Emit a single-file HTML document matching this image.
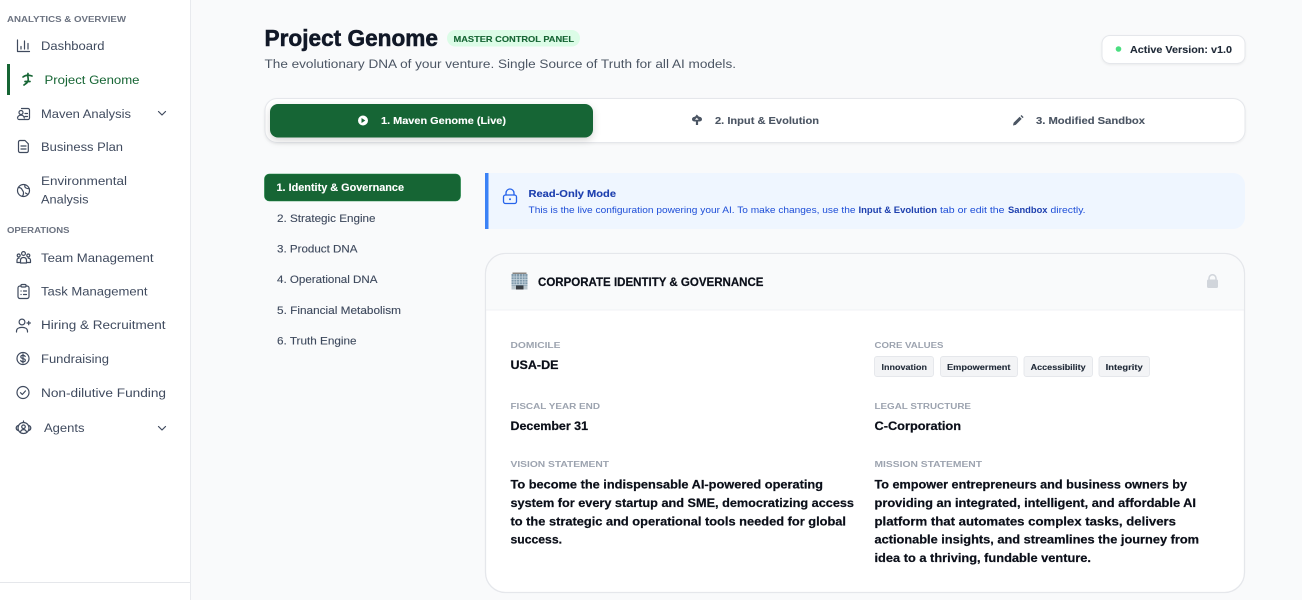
<!DOCTYPE html>
<html lang="en"><head><meta charset="utf-8"><title>Project Genome</title>
<style>
html,body{margin:0;padding:0;width:1302px;height:600px;overflow:hidden;background:#f9fafb}
svg{display:block}
text{font-family:"Liberation Sans",Arial,sans-serif;white-space:pre}
.nav{font-size:12.2px;fill:#3f4a5e}
.sec{font-size:8.6px;font-weight:700;fill:#6b7280}
.sub{font-size:10.8px;fill:#3f4a5e;stroke:#3f4a5e;stroke-width:.12}
.lab{font-size:8px;font-weight:700;fill:#9ca3af}
.val{font-size:12.2px;font-weight:700;fill:#0b0f19;stroke:#0b0f19;stroke-width:.22}
.tag{font-size:8.3px;font-weight:700;fill:#1f2937;stroke:#1f2937;stroke-width:.12}
.ic{fill:none;stroke:#3f4a5e;stroke-width:1.2;stroke-linecap:round;stroke-linejoin:round}
</style></head><body>
<svg xmlns="http://www.w3.org/2000/svg" width="1302" height="600" viewBox="0 0 1302 600">
<defs>
<filter id="s1" x="-10%" y="-40%" width="120%" height="190%"><feDropShadow dx="0" dy="3" stdDeviation="4" flood-color="#000" flood-opacity=".16"/></filter>
<filter id="s2" x="-5%" y="-10%" width="110%" height="125%"><feDropShadow dx="0" dy="1" stdDeviation="1" flood-color="#000" flood-opacity=".06"/></filter>
</defs>
<rect width="1302" height="600" fill="#f9fafb"/>

<!-- sidebar -->
<rect x="0" y="0" width="190" height="600" fill="#fff"/>
<rect x="190" y="0" width="1" height="600" fill="#e8eaee"/>
<rect x="0" y="582" width="190" height="1" fill="#e5e7eb"/>
<rect x="7" y="64" width="3" height="31" fill="#166534"/>

<text class="sec" x="7" y="22" textLength="119" lengthAdjust="spacingAndGlyphs">ANALYTICS &amp; OVERVIEW</text>
<text class="nav" x="41" y="50" textLength="63.500" lengthAdjust="spacingAndGlyphs">Dashboard</text>
<text class="nav" x="44.500" y="84" textLength="95" lengthAdjust="spacingAndGlyphs" style="fill:#166534">Project Genome</text>
<text class="nav" x="41" y="118" textLength="90" lengthAdjust="spacingAndGlyphs">Maven Analysis</text>
<text class="nav" x="41" y="151" textLength="82" lengthAdjust="spacingAndGlyphs">Business Plan</text>
<text class="nav" x="41" y="185" textLength="86" lengthAdjust="spacingAndGlyphs">Environmental</text>
<text class="nav" x="41" y="203.500" textLength="47.500" lengthAdjust="spacingAndGlyphs">Analysis</text>
<text class="sec" x="7" y="233" textLength="62.500" lengthAdjust="spacingAndGlyphs">OPERATIONS</text>
<text class="nav" x="41" y="262" textLength="112.500" lengthAdjust="spacingAndGlyphs">Team Management</text>
<text class="nav" x="41" y="295.500" textLength="106.500" lengthAdjust="spacingAndGlyphs">Task Management</text>
<text class="nav" x="41" y="329" textLength="124.500" lengthAdjust="spacingAndGlyphs">Hiring &amp; Recruitment</text>
<text class="nav" x="41" y="363" textLength="68" lengthAdjust="spacingAndGlyphs">Fundraising</text>
<text class="nav" x="41" y="397" textLength="125" lengthAdjust="spacingAndGlyphs">Non-dilutive Funding</text>
<text class="nav" x="44" y="432" textLength="40.500" lengthAdjust="spacingAndGlyphs">Agents</text>

<!-- sidebar icons -->
<path class="ic" d="M17.500 40v11.500h12M21 49v-2.500M24.500 49v-8M28 49v-5.500"/>
<g fill="none" stroke="#166534" stroke-width="1.700" stroke-linecap="round" stroke-linejoin="round">
<path d="M23 77c2.500-2 6-2 9-1"/><path d="M28 73.500c-1 3 1 5 0 7.500s-3 3-4 4"/><path d="M25 81.500h5"/>
</g>
<path class="ic" d="M21.500 108.500h6.500a1.500 1.500 0 0 1 1.500 1.500v8a1.500 1.500 0 0 1-1.500 1.500h-9a1.500 1.500 0 0 1-1-.5M25 113.500h2.500M25 116.500h2.500"/>
<circle class="ic" cx="21" cy="112.500" r="2"/><path class="ic" d="M17.500 118c.3-2 1.700-2.800 3.500-2.800s3 .8 3.300 2.800"/>
<path class="ic" d="M20 140.500h5l3.300 3.300v7.200a1.500 1.500 0 0 1-1.500 1.500H20a1.500 1.500 0 0 1-1.500-1.500v-9a1.500 1.500 0 0 1 1.500-1.500zM21 146h5M21 149h5"/>
<circle class="ic" cx="23.500" cy="190.500" r="6"/><path class="ic" d="M18.500 187.500c2 0 3 1 3.500 2s1.500 2 1.500 3-.5 3-1 3.500M25 185c-.5 1.500 0 2.500 1 3s2 1 3.200.5M25.500 193l2.500 1.500"/>
<g class="ic"><circle cx="23.500" cy="253.500" r="1.900"/><circle cx="18.700" cy="255.500" r="1.500"/><circle cx="28.300" cy="255.500" r="1.500"/><path d="M20.500 263v-2.500c0-2 1.300-3 3-3s3 1 3 3v2.500zM17 262.500h3.500M26.500 262.500H30.500v-2c0-1.500-1-2.300-2.300-2.300M17 262.500v-2c0-1.500.8-2.300 2-2.300"/></g>
<g class="ic"><rect x="18" y="286" width="11" height="12.500" rx="2"/><rect x="21" y="284.500" width="5" height="2.500" rx="1" fill="#fff"/><path d="M21 291h.1M23.500 291h3M21 294.500h.1M23.500 294.500h3"/></g>
<g class="ic"><circle cx="22" cy="322" r="2.900"/><path d="M16.500 332v-.8c0-2.500 2.300-3.800 5.500-3.800s5.500 1.300 5.500 3.800v.8M27 323h3.400M28.700 321.300v3.400"/></g>
<g class="ic"><circle cx="23" cy="358.500" r="6"/><path d="M25.200 356.500c-.4-.8-1.200-1.200-2.200-1.200-1.300 0-2.200.7-2.200 1.600 0 2.300 4.500 1 4.500 3.300 0 1-1 1.600-2.300 1.600-1.100 0-2-.5-2.300-1.300M23 354v9"/></g>
<g class="ic"><circle cx="23" cy="392.500" r="6"/><path d="M20.500 392.700l1.800 1.800 3.200-3.600"/></g>
<g class="ic"><circle cx="23.500" cy="428" r="5.500"/><circle cx="23.500" cy="426.800" r="1.800"/><path d="M20.500 431.800c.5-1.500 1.600-2.200 3-2.200s2.500.7 3 2.200M23.500 422.500v-1.500M18 425.500c-1.200.5-1.800 1.400-1.800 2.500s.6 2 1.800 2.500M29 425.500c1.200.5 1.800 1.400 1.800 2.500s-.6 2-1.800 2.500"/></g>
<path class="ic" d="M158.500 111.500l3.500 3.500 3.500-3.500M158.500 426.500l3.500 3.500 3.500-3.500"/>

<!-- heading -->
<text x="264.500" y="46" font-size="23" font-weight="700" fill="#111827" stroke="#111827" stroke-width=".55" textLength="173.500" lengthAdjust="spacingAndGlyphs">Project Genome</text>
<rect x="447" y="30" width="133" height="16.500" rx="8.200" fill="#dcfce7"/>
<text x="453.500" y="42" font-size="8.200" font-weight="700" fill="#166534" stroke="#166534" stroke-width=".1" textLength="120.500" lengthAdjust="spacingAndGlyphs">MASTER CONTROL PANEL</text>
<text x="264.500" y="68" font-size="12.200" fill="#4b5563" textLength="471.500" lengthAdjust="spacingAndGlyphs">The evolutionary DNA of your venture. Single Source of Truth for all AI models.</text>

<rect x="1102" y="35.500" width="143" height="28" rx="8" fill="#fff" stroke="#e5e7eb" filter="url(#s2)"/>
<circle cx="1118.500" cy="49" r="2.800" fill="#4ade80"/>
<text x="1130" y="53" font-size="10.500" font-weight="700" fill="#1f2937" stroke="#1f2937" stroke-width=".1" textLength="102" lengthAdjust="spacingAndGlyphs">Active Version: v1.0</text>

<!-- tabs -->
<rect x="265" y="98.500" width="980" height="44" rx="12" fill="#fff" stroke="#e5e7eb" filter="url(#s2)"/>
<rect x="270" y="104" width="323" height="33.500" rx="8" fill="#166534" filter="url(#s1)"/>
<circle cx="363" cy="120.500" r="5" fill="#fff"/><path d="M361.500 118v5l3.800-2.500z" fill="#166534"/>
<text x="381" y="124" font-size="10.500" font-weight="700" fill="#fff" stroke="#fff" stroke-width=".12" textLength="125" lengthAdjust="spacingAndGlyphs">1. Maven Genome (Live)</text>
<path d="M696.800 114.500l2.200 2.300c1.800 0 3 1.100 3 2.500 0 1.300-1 2.200-2.400 2.200h-1.500v3.500h-2.200v-3.500h-1.500c-1.400 0-2.400-.9-2.400-2.200 0-1.400 1.200-2.500 3-2.500z" fill="#4b5563"/>
<path d="M696.800 117.800l-1.800 2h3.600z" fill="#fff"/>
<text x="715" y="124" font-size="10.500" font-weight="700" fill="#4b5563" stroke="#4b5563" stroke-width=".12" textLength="104" lengthAdjust="spacingAndGlyphs">2. Input &amp; Evolution</text>
<path d="M1013 125.500l.6-2.700 6-6 2.100 2.100-6 6zM1020.500 116l1-1 2.100 2.100-1 1z" fill="#4b5563"/>
<text x="1036" y="124" font-size="10.500" font-weight="700" fill="#4b5563" stroke="#4b5563" stroke-width=".12" textLength="109" lengthAdjust="spacingAndGlyphs">3. Modified Sandbox</text>

<!-- sub nav -->
<rect x="264.500" y="174" width="196" height="27" rx="5" fill="#166534" stroke="#15803d" stroke-width=".6"/>
<text x="276.500" y="191" font-size="11" font-weight="700" fill="#fff" stroke="#fff" stroke-width=".12" textLength="127.500" lengthAdjust="spacingAndGlyphs">1. Identity &amp; Governance</text>
<text class="sub" x="277" y="222" textLength="98.500" lengthAdjust="spacingAndGlyphs">2. Strategic Engine</text>
<text class="sub" x="277" y="252.500" textLength="80.500" lengthAdjust="spacingAndGlyphs">3. Product DNA</text>
<text class="sub" x="277" y="283" textLength="100.500" lengthAdjust="spacingAndGlyphs">4. Operational DNA</text>
<text class="sub" x="277" y="314" textLength="124" lengthAdjust="spacingAndGlyphs">5. Financial Metabolism</text>
<text class="sub" x="277" y="344.500" textLength="79.500" lengthAdjust="spacingAndGlyphs">6. Truth Engine</text>

<!-- alert -->
<path d="M485 173H1233a12 12 0 0 1 12 12v32a12 12 0 0 1-12 12H485z" fill="#eff6ff"/>
<rect x="485" y="173" width="3.500" height="56" fill="#3b82f6"/>
<g fill="none" stroke="#2563eb" stroke-width="1.300" stroke-linecap="round" stroke-linejoin="round"><rect x="503.500" y="195" width="13" height="8.500" rx="2"/><path d="M506 195v-2a4 4 0 0 1 8 0v2"/></g><circle cx="510" cy="199.200" r="1" fill="#2563eb"/>
<text x="528.500" y="197" font-size="10.500" font-weight="700" fill="#1e40af" stroke="#1e40af" stroke-width=".12" textLength="87.500" lengthAdjust="spacingAndGlyphs">Read-Only Mode</text>
<g font-size="9.500" fill="#1d4ed8">
<text x="528.500" y="213" textLength="327" lengthAdjust="spacingAndGlyphs">This is the live configuration powering your AI. To make changes, use the</text>
<text x="858.500" y="213" font-weight="700" fill="#1e40af" textLength="78.500" lengthAdjust="spacingAndGlyphs">Input &amp; Evolution</text>
<text x="940" y="213" textLength="64.500" lengthAdjust="spacingAndGlyphs">tab or edit the</text>
<text x="1008" y="213" font-weight="700" fill="#1e40af" textLength="39.500" lengthAdjust="spacingAndGlyphs">Sandbox</text>
<text x="1050.500" y="213" textLength="35" lengthAdjust="spacingAndGlyphs">directly.</text>
</g>

<!-- card -->
<rect x="485.500" y="253.500" width="759" height="339" rx="20" fill="#fff" stroke="#e5e7eb" stroke-width="1.300"/>
<path d="M486.200 310V273.500a19.300 19.300 0 0 1 19.300-19.300H1224.500a19.300 19.300 0 0 1 19.300 19.300V310z" fill="#f9fafb"/>
<rect x="486" y="309.500" width="758" height="1" fill="#f0f1f4"/>

<!-- building emoji -->
<rect x="512.500" y="272.500" width="14" height="1.600" fill="#8a8580"/>
<rect x="511.500" y="274" width="16" height="15.500" fill="#7f99ab"/>
<g stroke="#c8d6df" stroke-width=".7"><path d="M511.500 277h16M511.500 279.500h16M511.500 282h16M511.500 284.500h16M514 274v11M516.700 274v11M519.500 274v11M522.300 274v11M525 274v11"/></g>
<rect x="511.500" y="285.500" width="16" height="4" fill="#b9c5cc"/>
<rect x="516" y="285.500" width="7.500" height="4" fill="#3a3f44"/>
<text x="538" y="286" font-size="12" font-weight="700" fill="#0b0f19" stroke="#0b0f19" stroke-width=".2" textLength="225.500" lengthAdjust="spacingAndGlyphs">CORPORATE IDENTITY &amp; GOVERNANCE</text>
<rect x="1207" y="279.500" width="11" height="8.500" rx="1.500" fill="#d1d5db"/>
<path d="M1209 280v-1.700a3.500 3.500 0 0 1 7 0v1.700" fill="none" stroke="#d1d5db" stroke-width="1.500"/>

<text class="lab" x="510.500" y="348" textLength="50" lengthAdjust="spacingAndGlyphs">DOMICILE</text>
<text class="val" x="510.500" y="369" textLength="48" lengthAdjust="spacingAndGlyphs">USA-DE</text>
<text class="lab" x="874.500" y="348" textLength="69" lengthAdjust="spacingAndGlyphs">CORE VALUES</text>
<g fill="#f3f4f6" stroke="#e5e7eb" stroke-width=".9">
<rect x="874.500" y="356.500" width="59" height="20" rx="2.500"/>
<rect x="940.500" y="356.500" width="77" height="20" rx="2.500"/>
<rect x="1024" y="356.500" width="68.500" height="20" rx="2.500"/>
<rect x="1099" y="356.500" width="50.500" height="20" rx="2.500"/>
</g>
<text class="tag" x="881.500" y="370" textLength="45.500" lengthAdjust="spacingAndGlyphs">Innovation</text>
<text class="tag" x="947" y="370" textLength="63.500" lengthAdjust="spacingAndGlyphs">Empowerment</text>
<text class="tag" x="1030.700" y="370" textLength="55" lengthAdjust="spacingAndGlyphs">Accessibility</text>
<text class="tag" x="1105.700" y="370" textLength="37" lengthAdjust="spacingAndGlyphs">Integrity</text>

<text class="lab" x="510.500" y="409" textLength="89.500" lengthAdjust="spacingAndGlyphs">FISCAL YEAR END</text>
<text class="val" x="510.500" y="430" textLength="77.500" lengthAdjust="spacingAndGlyphs">December 31</text>
<text class="lab" x="874.500" y="409" textLength="96.500" lengthAdjust="spacingAndGlyphs">LEGAL STRUCTURE</text>
<text class="val" x="874.500" y="430" textLength="86.500" lengthAdjust="spacingAndGlyphs">C-Corporation</text>

<text class="lab" x="510.500" y="467" textLength="98.500" lengthAdjust="spacingAndGlyphs">VISION STATEMENT</text>
<text class="val" x="510.500" y="488.500" textLength="312.500" lengthAdjust="spacingAndGlyphs">To become the indispensable AI-powered operating</text>
<text class="val" x="510.500" y="507" textLength="343.500" lengthAdjust="spacingAndGlyphs">system for every startup and SME, democratizing access</text>
<text class="val" x="510.500" y="525.500" textLength="335.500" lengthAdjust="spacingAndGlyphs">to the strategic and operational tools needed for global</text>
<text class="val" x="510.500" y="543.500" textLength="51.500" lengthAdjust="spacingAndGlyphs">success.</text>

<text class="lab" x="874.500" y="467" textLength="107.500" lengthAdjust="spacingAndGlyphs">MISSION STATEMENT</text>
<text class="val" x="874.500" y="488.500" textLength="312.500" lengthAdjust="spacingAndGlyphs">To empower entrepreneurs and business owners by</text>
<text class="val" x="874.500" y="507" textLength="321.500" lengthAdjust="spacingAndGlyphs">providing an integrated, intelligent, and affordable AI</text>
<text class="val" x="874.500" y="525.500" textLength="301.500" lengthAdjust="spacingAndGlyphs">platform that automates complex tasks, delivers</text>
<text class="val" x="874.500" y="543.500" textLength="324.500" lengthAdjust="spacingAndGlyphs">actionable insights, and streamlines the journey from</text>
<text class="val" x="874.500" y="562" textLength="216.500" lengthAdjust="spacingAndGlyphs">idea to a thriving, fundable venture.</text>
</svg>
</body></html>
